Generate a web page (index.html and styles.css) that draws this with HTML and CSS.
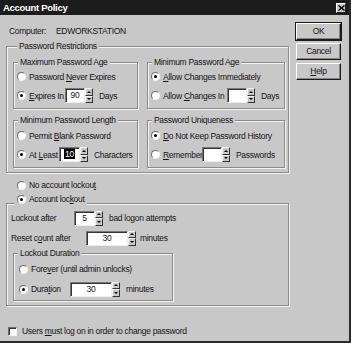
FILE: index.html
```html
<!DOCTYPE html>
<html lang="en">
<head>
    <meta charset="UTF-8">
    <title>Account Policy</title>
    <link rel="stylesheet" href="styles.css">
</head>
<body>
<div class="window">
    <div class="titlebar">
        <span class="title">Account Policy</span>
        <span class="close"><svg width="7" height="6" viewBox="0 0 7 6"><path d="M0.5 0.5L6.5 5.5M6.5 0.5L0.5 5.5" stroke="#000" stroke-width="1.4"/></svg></span>
    </div>

    <div class="dialog">
        <div class="main">
            <div class="computer"><span>Computer:</span><span class="machine">EDWORKSTATION</span></div>

            <div class="group restrictions">
                <div class="group-title">Password Restrictions</div>
                <div class="grid">
                    <div class="group box upper">
                        <div class="group-title">Maximum Password Age</div>
                        <div class="option"><span class="radio"></span><span>Password <u>N</u>ever Expires</span></div>
                        <div class="option">
                            <span class="radio on"></span><span class="lbl w-expires"><u>E</u>xpires In</span>
                            <span class="spin"><span class="field f-days">90</span><span class="arrows"><i class="up"></i><i class="down"></i></span></span>
                            <span class="unit">Days</span>
                        </div>
                    </div>
                    <div class="group box upper">
                        <div class="group-title">Minimum Password Age</div>
                        <div class="option"><span class="radio on"></span><span><u>A</u>llow Changes Immediately</span></div>
                        <div class="option">
                            <span class="radio"></span><span class="lbl w-allow">Allow <u>C</u>hanges In</span>
                            <span class="spin"><span class="field f-days"></span><span class="arrows"><i class="up"></i><i class="down"></i></span></span>
                            <span class="unit">Days</span>
                        </div>
                    </div>
                    <div class="group box lower">
                        <div class="group-title">Minimum Password Length</div>
                        <div class="option"><span class="radio"></span><span>Permit <u>B</u>lank Password</span></div>
                        <div class="option">
                            <span class="radio on"></span><span class="lbl w-least">At <u>L</u>east</span>
                            <span class="spin"><span class="field f-chars"><span class="sel">10</span></span><span class="arrows"><i class="up"></i><i class="down"></i></span></span>
                            <span class="unit">Characters</span>
                        </div>
                    </div>
                    <div class="group box lower">
                        <div class="group-title">Password Uniqueness</div>
                        <div class="option"><span class="radio on"></span><span><u>D</u>o Not Keep Password History</span></div>
                        <div class="option">
                            <span class="radio"></span><span class="lbl w-remember"><u>R</u>emember</span>
                            <span class="spin"><span class="field f-days"></span><span class="arrows"><i class="up"></i><i class="down"></i></span></span>
                            <span class="unit">Passwords</span>
                        </div>
                    </div>
                </div>
            </div>

            <div class="option solo"><span class="radio"></span><span>No account lockou<u>t</u></span></div>

            <div class="group lockout">
                <div class="option legend"><span class="radio on"></span><span>Account loc<u>k</u>out</span></div>
                <div class="line">
                    <span class="lbl w-after">Lockout after</span>
                    <span class="spin"><span class="field f-count">5</span><span class="arrows"><i class="up"></i><i class="down"></i></span></span>
                    <span class="unit">bad logon attempts</span>
                </div>
                <div class="line">
                    <span class="lbl w-reset">Reset c<u>o</u>unt after</span>
                    <span class="spin"><span class="field f-wide">30</span><span class="arrows"><i class="up"></i><i class="down"></i></span></span>
                    <span class="unit narrow">minutes</span>
                </div>
                <div class="group duration">
                    <div class="group-title">Lockout Duration</div>
                    <div class="option"><span class="radio"></span><span>Fore<u>v</u>er (until admin unlocks)</span></div>
                    <div class="option">
                        <span class="radio on"></span><span class="lbl w-duration">Dura<u>t</u>ion</span>
                        <span class="spin"><span class="field f-wide">30</span><span class="arrows"><i class="up"></i><i class="down"></i></span></span>
                        <span class="unit">minutes</span>
                    </div>
                </div>
            </div>

            <div class="check-row"><span class="checkbox"></span><span>Users <u>m</u>ust log on in order to change password</span></div>
        </div>

        <div class="buttons">
            <div class="btn default">OK</div>
            <div class="btn">Cancel</div>
            <div class="btn"><u>H</u>elp</div>
        </div>
    </div>
</div>
</body>
</html>
```

FILE: styles.css
```css
* {
    box-sizing: border-box;
}

body {
    margin: 0;
    width: 351px;
    height: 343px;
    overflow: hidden;
    background-color: #c8c8c8;
    font-family: "Liberation Sans", Arial, sans-serif;
    font-size: 8.5px;
    letter-spacing: -0.3px;
    color: #151515;
}

u {
    text-decoration-thickness: 1px;
    text-underline-offset: 1px;
}

.window {
    width: 351px;
    height: 343px;
    border-right: 2px solid #2a2a2a;
    border-bottom: 2px solid #2a2a2a;
}

.titlebar {
    height: 15px;
    background-color: #1c1c1c;
    display: flex;
    align-items: center;
    justify-content: space-between;
    padding: 0 3px 0 3px;
}

.title {
    color: #fff;
    font-weight: bold;
    font-size: 9.5px;
}

.close {
    width: 10px;
    height: 10px;
    background: #c8c8c8;
    border: 1px solid;
    border-color: #fff #222 #222 #fff;
    display: flex;
    align-items: center;
    justify-content: center;
}

.dialog {
    display: flex;
}

.main {
    width: 290px;
    padding-left: 6px;
}

.computer {
    margin-top: 10px;
    padding-left: 3px;
    line-height: 12px;
}
.machine {margin-left: 10px;}

/* etched group boxes */
.group {
    border: 1px solid #8a8a8a;
    box-shadow: inset 1px 1px 0 #f4f4f4, 1px 1px 0 #f4f4f4;
}

.group-title {
    display: table;
    line-height: 12px;
    margin: -7px 0 0 4px;
    padding: 0 2px;
    background: #c8c8c8;
}

.restrictions {
    width: 283px;
    height: 127px;
    margin-top: 9px;
    padding-left: 6px;
}

.grid {
    display: grid;
    grid-template-columns: 125px 138px;
    column-gap: 9px;
    row-gap: 11px;
    margin-top: 10px;
}

.box.upper {height: 47px;}
.box.lower {height: 48px;}
.box .group-title {margin-bottom: -1px;}
.box.lower .group-title {margin-bottom: 0;}

.option {
    display: flex;
    align-items: center;
    height: 19px;
    padding-left: 3px;
    white-space: nowrap;
}

.radio {
    width: 9px;
    height: 9px;
    margin-right: 3px;
    border-radius: 50%;
    background: #fff;
    border: 1px solid;
    border-color: #6e6e6e #f2f2f2 #f2f2f2 #6e6e6e;
    flex: none;
    position: relative;
}
.radio.on::after {
    content: "";
    position: absolute;
    left: 2px;
    top: 2px;
    width: 3px;
    height: 3px;
    border-radius: 50%;
    background: #000;
}

.lbl {flex: none;}
.w-expires {width: 36px;}
.w-allow {width: 64px;}
.w-least {width: 30px;}
.w-remember {width: 39px; overflow: hidden;}
.w-after {width: 63px;}
.w-reset {width: 75px;}
.w-duration {width: 39px;}

/* spin boxes */
.spin {
    display: flex;
    height: 15px;
    flex: none;
}

.field {
    height: 15px;
    background: #fff;
    border: 1px solid;
    border-color: #777 #eee #eee #777;
    box-shadow: inset 1px 1px 0 #333;
    text-align: center;
    line-height: 13px;
}
.f-days {width: 20px;}
.f-chars {width: 21px;}
.f-count {width: 21px;}
.f-wide {width: 42px;}

.sel {
    background: #000;
    color: #fff;
    padding: 0 1px;
}

.arrows {
    width: 8px;
    display: flex;
    flex-direction: column;
}
.arrows i {
    flex: 1;
    background: #c8c8c8;
    border: 1px solid;
    border-color: #f4f4f4 #333 #333 #f4f4f4;
    display: flex;
    align-items: center;
    justify-content: center;
}
.arrows i::after {
    content: "";
    border-left: 2px solid transparent;
    border-right: 2px solid transparent;
}
.arrows .up::after {border-bottom: 2px solid #000;}
.arrows .down::after {border-top: 2px solid #000;}

.unit {margin-left: 6px;}
.unit.narrow {margin-left: 4px;}

/* account lockout */
.solo {
    height: 14px;
    margin-top: 5px;
    padding-left: 11px;
}

.lockout {
    width: 283px;
    height: 103px;
    margin-top: 11px;
    padding-left: 4px;
}

.legend {
    width: max-content;
    height: 14px;
    margin: -12px 0 0 4px;
    padding: 0 2px 0 2px;
    background: #c8c8c8;
}

.line {
    display: flex;
    align-items: center;
    height: 20px;
    white-space: nowrap;
}
.lockout .legend + .line {margin-top: 2px;}

.duration {
    width: 160px;
    height: 48px;
    margin: 5px 0 0 2px;
}
.duration .option {
    height: 20px;
    padding-left: 5px;
}

.check-row {
    display: flex;
    align-items: center;
    height: 14px;
    margin-top: 18px;
    padding-left: 2px;
    white-space: nowrap;
}

.checkbox {
    width: 9px;
    height: 9px;
    margin-right: 5px;
    background: #fff;
    border: 1px solid;
    border-color: #6e6e6e #f2f2f2 #f2f2f2 #6e6e6e;
    box-shadow: inset 1px 1px 0 #333;
}

/* command buttons */
.buttons {
    display: flex;
    flex-direction: column;
    gap: 3px;
    padding-top: 8px;
    margin-left: 6px;
}

.btn {
    width: 45px;
    height: 17px;
    border: 1px solid;
    border-color: #fff #1a1a1a #1a1a1a #fff;
    box-shadow: inset -1px -1px 0 #858585;
    text-align: center;
    line-height: 15px;
}
.btn.default {
    outline: 1px solid #1a1a1a;
}
```
